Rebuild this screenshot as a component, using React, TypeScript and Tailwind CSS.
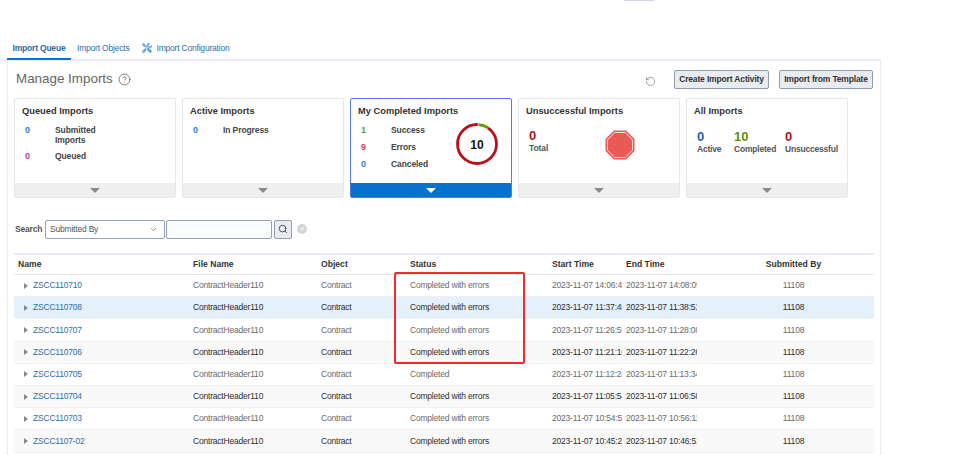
import { ChevronDown, CircleHelp, Search, RotateCcw } from "lucide-react";
import { FaTools } from "react-icons/fa";

const font = "font-['Liberation_Sans',Arial,sans-serif]";

const rows = [
  ["ZSCC110710", "Completed with errors", "2023-11-07 14:06:42", "2023-11-07 14:08:09"],
  ["ZSCC110708", "Completed with errors", "2023-11-07 11:37:45", "2023-11-07 11:38:51"],
  ["ZSCC110707", "Completed with errors", "2023-11-07 11:26:59", "2023-11-07 11:28:08"],
  ["ZSCC110706", "Completed with errors", "2023-11-07 11:21:16", "2023-11-07 11:22:26"],
  ["ZSCC110705", "Completed", "2023-11-07 11:12:24", "2023-11-07 11:13:34"],
  ["ZSCC110704", "Completed with errors", "2023-11-07 11:05:54", "2023-11-07 11:06:58"],
  ["ZSCC110703", "Completed with errors", "2023-11-07 10:54:55", "2023-11-07 10:56:11"],
  ["ZSCC1107-02", "Completed with errors", "2023-11-07 10:45:22", "2023-11-07 10:46:51"],
];

const gridCols = "grid grid-cols-[175px_128px_89px_142px_74px_71px_1fr]";

const Caret = ({ active }: { active?: boolean }) => (
  <div className={`h-[14px] flex items-center justify-center ${active ? "bg-[#0572ce]" : "bg-[#efefef]"}`}>
    <div className={`w-0 h-0 border-l-[5px] border-r-[5px] border-t-[5px] border-l-transparent border-r-transparent ${active ? "border-t-white" : "border-t-[#8a8a8a]"}`} />
  </div>
);

const Card = ({ title, active, children }: { title: string; active?: boolean; children: React.ReactNode }) => (
  <div className={`w-[162px] h-[100px] flex flex-col rounded-[2px] border ${active ? "border-[#5a78d8]" : "border-[#e3e8ee]"}`}>
    <div className="flex-1 min-h-0 pl-[7px] pt-[6px]">
      <div className="text-[9.3px] leading-[12px] font-bold text-[#333]">{title}</div>
      {children}
    </div>
    <Caret active={active} />
  </div>
);

const Stat = ({ n, color, label, h = "h-[17px]" }: { n: string; color: string; label: React.ReactNode; h?: string }) => (
  <div className={`flex ${h} leading-[10px]`}>
    <span className={`w-[33px] pl-[3px] text-[9px] font-bold ${color}`}>{n}</span>
    <span className="text-[8.5px] tracking-[-0.1px] font-bold text-[#444]">{label}</span>
  </div>
);

const Metric = ({ n, color, label, w }: { n: string; color: string; label: string; w: string }) => (
  <div className={w}>
    <div className={`text-[13px] leading-[14px] font-bold ${color}`}>{n}</div>
    <div className="text-[8.5px] tracking-[-0.2px] leading-[11px] font-bold text-[#555]">{label}</div>
  </div>
);

const App = () => {
  return (
    <div className={`relative w-[975px] h-[455px] overflow-hidden bg-white ${font}`}>
      <div className="h-[41px] flex justify-start">
        <div className="ml-[624px] w-[30px] h-[1px] bg-[#d5d5e8]" />
      </div>

      <div className="w-[881px] h-[20px] flex items-start pt-[1px] border-b-2 border-[#e8eef4] text-[8.5px] tracking-[-0.2px] text-[#2f6fa8]">
        <div className="ml-[7px] w-[64px] h-[18px] text-center font-bold border-b-2 border-[#0572ce]">
          <span className="leading-[12px] text-[#2b6a9f]">Import Queue</span>
        </div>
        <div className="ml-[6px] leading-[12px]">Import Objects</div>
        <div className="ml-[13px] leading-[12px] flex items-center gap-[4px]">
          <FaTools className="w-[10px] h-[10px] text-[#6aa5d8]" />
          <span>Import Configuration</span>
        </div>
      </div>

      <div className="ml-[7px] w-[874px] h-[394px] border-l border-r border-[#e8eef4] pl-[6px] pr-[7px]">
        <div className="h-[37px] flex items-start">
          <div className="ml-[2px] mt-[8px] flex items-center gap-[5px]">
            <span className="text-[13.4px] leading-[20px] text-[#666]">Manage Imports</span>
            <CircleHelp className="w-[13px] h-[13px] text-[#666]" strokeWidth={1.5} />
          </div>
          <RotateCcw className="ml-auto mt-[15px] mr-[18px] w-[11px] h-[11px] text-[#777]" strokeWidth={1.5} />
          <button className="mt-[9px] w-[95px] h-[19px] rounded-[2px] border border-[#8e9bab] bg-[#e8ecf0] text-[8.5px] tracking-[-0.15px] font-bold text-[#333]">
            Create Import Activity
          </button>
          <button className="mt-[9px] ml-[10px] w-[94px] h-[19px] rounded-[2px] border border-[#8e9bab] bg-[#e8ecf0] text-[8.5px] tracking-[-0.15px] font-bold text-[#333]">
            Import from Template
          </button>
        </div>

        <div className="flex gap-[6px]">
          <Card title="Queued Imports">
            <div className="mt-[8px]">
              <Stat n="0" color="text-[#2f7fce]" h="h-[26px]" label={<>Submitted<br />Imports</>} />
              <Stat n="0" color="text-[#b53fa0]" label="Queued" />
            </div>
          </Card>
          <Card title="Active Imports">
            <div className="mt-[8px]">
              <Stat n="0" color="text-[#2f7fce]" label="In Progress" />
            </div>
          </Card>
          <Card title="My Completed Imports" active>
            <div className="flex">
              <div className="mt-[8px] w-[98px]">
                <Stat n="1" color="text-[#5f9a2b]" label="Success" />
                <Stat n="9" color="text-[#c0484f]" label="Errors" />
                <Stat n="0" color="text-[#2f7fce]" label="Canceled" />
              </div>
              <svg width="42" height="42" viewBox="0 0 42 42" className="mt-[6px]">
                <circle cx="21" cy="21" r="19.5" fill="none" stroke="#b5121b" strokeWidth="2.8" />
                <path d="M21.8 1.5 A19.5 19.5 0 0 1 32 5" fill="none" stroke="#ffffff" strokeWidth="4" />
                <path d="M22.5 1.6 A19.5 19.5 0 0 1 32.2 4.9" fill="none" stroke="#5f9a0a" strokeWidth="2.8" />
                <text x="21" y="25.5" textAnchor="middle" fontSize="12" fontWeight="700" fill="#111">10</text>
              </svg>
            </div>
          </Card>
          <Card title="Unsuccessful Imports">
            <div className="flex">
              <div className="mt-[12px] ml-[3px] w-[75px]">
                <div className="text-[13px] leading-[14px] font-bold text-[#b5121b]">0</div>
                <div className="text-[8.5px] tracking-[-0.1px] leading-[11px] font-bold text-[#555]">Total</div>
              </div>
              <svg width="30" height="30" viewBox="0 0 30 30" className="mt-[13px] ml-[1px]">
                <polygon points="9,0.5 21,0.5 29.5,9 29.5,21 21,29.5 9,29.5 0.5,21 0.5,9" fill="#ea5a55" />
                <polygon points="9.8,2.5 20.2,2.5 27.5,9.8 27.5,20.2 20.2,27.5 9.8,27.5 2.5,20.2 2.5,9.8" fill="none" stroke="#fff" strokeWidth="0.8" />
              </svg>
            </div>
          </Card>
          <Card title="All Imports">
            <div className="mt-[13px] ml-[3px] flex">
              <Metric n="0" color="text-[#1f5fb0]" label="Active" w="w-[37px]" />
              <Metric n="10" color="text-[#5f8f0a]" label="Completed" w="w-[51px]" />
              <Metric n="0" color="text-[#b5121b]" label="Unsuccessful" w="w-[54px]" />
            </div>
          </Card>
        </div>

        <div className="mt-[22px] h-[18px] flex items-center">
          <span className="ml-[1px] w-[30px] text-[8.5px] tracking-[-0.2px] font-bold text-[#555]">Search</span>
          <div className="w-[120px] h-[19px] flex items-center justify-between pl-[4px] pr-[6px] border border-[#93a1b0] rounded-[2px] text-[8.5px] tracking-[-0.2px] text-[#555]">
            Submitted By
            <ChevronDown className="w-[9px] h-[9px] text-[#777]" />
          </div>
          <div className="ml-[1px] w-[106px] h-[19px] border border-[#93a1b0] rounded-[2px] bg-[#f9fbfc]" />
          <div className="ml-[2px] w-[18px] h-[19px] flex items-center justify-center border border-[#93a1b0] rounded-[2px] bg-[#e8ecf0]">
            <Search className="w-[10px] h-[10px] text-[#555]" strokeWidth={2.4} />
          </div>
          <div className="ml-[5px] w-[10px] h-[10px] rounded-full bg-[#d3d6d9] flex items-center justify-center text-[8px] leading-none text-white">×</div>
        </div>

        <div className="mt-[15px] w-[860px] text-[8.5px] tracking-[-0.2px]">
          <div className={`${gridCols} h-[22px] items-center pl-[4px] border-t-2 border-b border-t-[#e8eef4] border-b-[#dfe5ea] font-bold text-[8.6px] tracking-normal text-[#333]`}>
            <span>Name</span>
            <span>File Name</span>
            <span>Object</span>
            <span>Status</span>
            <span>Start Time</span>
            <span>End Time</span>
            <span className="text-center pl-[16px]">Submitted By</span>
          </div>
          {rows.map((row, index) => {
            const even = index % 2 === 1;
            const bg = index === 1 ? "bg-[#e4f1fd]" : even ? "bg-[#f9f9f9]" : "bg-white";
            return (
              <div
                key={row[0]}
                className={`${gridCols} h-[22.2px] items-center pl-[4px] border-b border-[#f1f1f1] ${bg} ${even ? "text-[#2e2e2e]" : "text-[#6a6a6a]"}`}
              >
                <div className="flex items-center">
                  <div className="ml-[6px] mr-[5px] w-0 h-0 border-t-[3px] border-b-[3px] border-l-[4px] border-t-transparent border-b-transparent border-l-[#888]" />
                  <span className="text-[#2f6fa8]">{row[0]}</span>
                </div>
                <span>ContractHeader110</span>
                <span>Contract</span>
                <span>{row[1]}</span>
                <span className="overflow-hidden whitespace-nowrap mr-[4px]">{row[2]}</span>
                <span className="overflow-hidden whitespace-nowrap">{row[3]}</span>
                <span className="text-center pl-[16px]">11108</span>
              </div>
            );
          })}
        </div>
      </div>

      <div className="absolute left-[394px] top-[272px] w-[131px] h-[92px] border-2 border-[#f02c2c] rounded-[2px]" />
    </div>
  );
};

export default App;
